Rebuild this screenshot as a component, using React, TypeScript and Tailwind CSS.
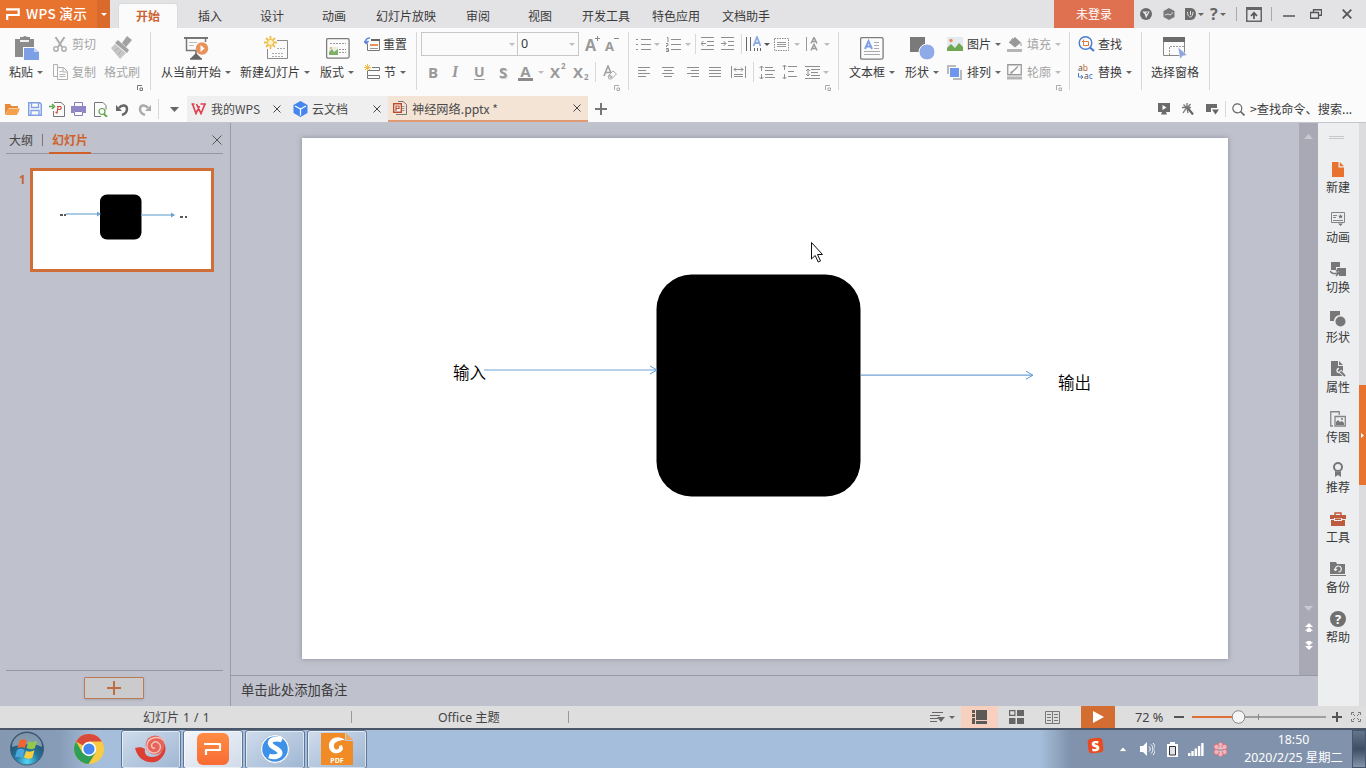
import React from "react";

type P = { className?: string; children?: React.ReactNode };

const Cell = ({ className = "", children }: P) => (
  <div className={`flex shrink-0 items-center whitespace-nowrap ${className}`}>{children}</div>
);

const Ic = ({ w, h, className = "", children }: P & { w: number; h: number }) => (
  <svg width={w} height={h} viewBox={`0 0 ${w} ${h}`} fill="none" className={`shrink-0 ${className}`}>
    {children}
  </svg>
);

const Arr = ({ className = "text-[#666]" }: P) => (
  <Ic w={6} h={3} className={className}>
    <path d="M0 0h6L3 3z" fill="currentColor" />
  </Ic>
);
const PALE = "text-[#bdbdbd]";

const VSep = ({ className = "h-[58px]" }: P) => <div className={`w-px shrink-0 bg-[#d8d8d8] ${className}`} />;

const Launcher = ({ className = "", color = "#aaa" }: P & { color?: string }) => (
  <Ic w={6} h={6} className={className}>
    <path d="M.5 5V.5H5M5.500 3v2.500H3V3z" stroke={color} />
  </Ic>
);

const Close = () => (
  <Ic w={8} h={8} className="text-[#444]">
    <path d="M.5.500l7 7M7.500.500l-7 7" stroke="currentColor" />
  </Ic>
);

/* ---------- title bar ---------- */
function TitleBar() {
  return (
    <div className="flex h-7 bg-[#e3e3e5] text-xs text-[#3a3a3a]">
      <Cell className="w-[97px] bg-[#e8732f] pl-[6px]">
        <Ic w={15} h={12}>
          <path d="M0 1.300h12.700v5.700H1.200V12" stroke="#fff" strokeWidth="2.200" />
        </Ic>
        <span className="ml-[5px] text-[13.6px] leading-none font-medium tracking-[0.3px] text-white">WPS 演示</span>
      </Cell>
      <Cell className="w-[13px] justify-center bg-[#d96a2c]">
        <Arr className="text-white" />
      </Cell>
      <div className="ml-2 flex w-[60px] items-end">
        <div className="flex h-[25px] w-full items-center justify-center rounded-t-sm border border-b-0 border-[#dadada] bg-[#fbfbfb] font-bold text-[#cc6230]">
          开始
        </div>
      </div>
      <div className="flex pt-[3px]">
        <Cell className="w-[62px] pl-5">插入</Cell>
        <Cell className="w-[62px] pl-5">设计</Cell>
        <Cell className="w-[62px] pl-5">动画</Cell>
        <Cell className="w-[82px] pl-3">幻灯片放映</Cell>
        <Cell className="w-[62px] pl-5">审阅</Cell>
        <Cell className="w-[62px] pl-5">视图</Cell>
        <Cell className="w-[70px] pl-3">开发工具</Cell>
        <Cell className="w-[70px] pl-3">特色应用</Cell>
        <Cell className="w-[70px] pl-3">文档助手</Cell>
      </div>
      <Cell className="ml-auto w-20 justify-center bg-[#df7150] text-white">未登录</Cell>
      <div className="flex w-[232px] items-center">
        <Cell className="w-[35px] pl-1.5">
          <Ic w={12} h={12}>
            <circle cx="6" cy="6" r="6" fill="#6b6b6b" />
            <path d="M2.200 3.500h7.600L6 10.200 4.800 6.500z" fill="#e3e3e5" />
            <path d="M6 5.500l2-1" stroke="#6b6b6b" />
          </Ic>
        </Cell>
        <Cell className="-ml-[6px] w-[17px]">
          <Ic w={12} h={12}>
            <path d="M6 0l5.500 3v6L6 12 .5 9V3z" fill="#777" />
            <path d="M2 7l3-1 2 1 3-2.500" stroke="#e3e3e5" strokeWidth=".9" />
          </Ic>
        </Cell>
        <Cell className="ml-[5px] w-[25px] gap-[2px]">
          <Ic w={11} h={12}>
            <path d="M0 0h6a5 6 0 010 12H0z" fill="#6b6b6b" />
            <path d="M2.500 4c0 4 2 5 3 5s2.500-2 2.500-5M5.500 3v4" stroke="#e3e3e5" />
          </Ic>
          <Arr />
        </Cell>
        <Cell className="w-[26px] gap-[2px]">
          <span className="font-['Open_Sans',sans-serif] text-[16px] leading-none font-bold text-[#666]">?</span>
          <Arr />
        </Cell>
        <VSep className="h-3.5 !bg-[#aaa]" />
        <Cell className="w-[34px] pl-[9px]">
          <Ic w={16} h={15}>
            <path d="M.75.750h14.500v13.500H.75z" stroke="#666" strokeWidth="1.500" />
            <path d="M1 2h14" stroke="#666" strokeWidth="2" />
            <path d="M8 12V6M5 9l3-3.200L11 9" stroke="#555" strokeWidth="1.700" />
          </Ic>
        </Cell>
        <VSep className="h-3.5 !bg-[#aaa]" />
        <Cell className="w-[38px] pl-[11px]">
          <Ic w={12} h={10}>
            <path d="M0 7h12" stroke="#555" strokeWidth="1.500" />
          </Ic>
        </Cell>
        <Cell className="w-[32px]">
          <Ic w={12} h={10}>
            <path d="M3.500 3V.750h8v5.500H9M.5 3.500h8v5.750h-8z" stroke="#555" strokeWidth="1.300" />
          </Ic>
        </Cell>
        <Cell>
          <Ic w={10} h={10}>
            <path d="M.7.700l8.600 8.600M9.300.700L.7 9.300" stroke="#555" strokeWidth="1.800" />
          </Ic>
        </Cell>
      </div>
    </div>
  );
}

/* ---------- ribbon ---------- */
const Big = ({ className = "", icon, label, arrow, pale }: P & { icon: React.ReactNode; label: string; arrow?: boolean; pale?: boolean }) => (
  <div className={`flex shrink-0 flex-col ${className}`}>
    <div className="flex h-8 items-center">{icon}</div>
    <div className={`flex h-4 items-center gap-[4px] whitespace-nowrap ${pale ? "text-[#a5a5a5]" : ""}`}>
      {label}
      {arrow && <Arr />}
    </div>
  </div>
);

const Rows = ({ className = "", top, bottom }: P & { top: React.ReactNode; bottom: React.ReactNode }) => (
  <div className={`flex shrink-0 flex-col ${className}`}>
    <div className="flex h-7 items-center pb-1">{top}</div>
    <div className="flex h-6 items-center">{bottom}</div>
  </div>
);

const Lines = ({ d, w = 12, h = 11, className = "" }: { d: string; w?: number; h?: number; className?: string }) => (
  <Ic w={w} h={h} className={className}>
    <path d={d} stroke="#8e8e8e" />
  </Ic>
);

const Letter = ({ className = "text-[14px]", children }: P) => (
  <span className={`font-['Open_Sans',sans-serif] leading-none font-bold text-[#999] ${className}`}>{children}</span>
);

function Ribbon() {
  return (
    <div className="flex h-[68px] bg-[#fbfbfb] pt-1 text-xs leading-none text-[#3a3a3a]">
      {/* clipboard */}
      <div className="flex w-[150px]">
        <Big
          className="ml-[9px] w-[44px]"
          label="粘贴"
          arrow
          icon={
            <Ic w={25} h={24} className="ml-1.5">
              <path d="M0 3h5V1h3a3 3 0 014 0h3v2h4v9H9v9H0z" fill="#8b8b8b" />
              <path d="M5 4h9v2H5z" fill="#eee" />
              <path d="M8 11h11l6 5v8H8z" fill="#fbfbfb" />
              <path d="M9 12h10l5 4v8H9z" fill="#7d9fe6" />
              <path d="M19 12v4h5z" fill="#c7d6f6" />
            </Ic>
          }
        />
        <Rows
          className="w-[51px] text-[#a5a5a5]"
          top={
            <>
              <Ic w={14} h={15}>
                <path d="M2.500 0l6.500 10M11.500 0L5 10" stroke="#adadad" strokeWidth="2" />
                <circle cx="3" cy="12" r="2.200" stroke="#adadad" strokeWidth="1.500" />
                <circle cx="11" cy="12" r="2.200" stroke="#adadad" strokeWidth="1.500" />
              </Ic>
              <span className="ml-[5px]">剪切</span>
            </>
          }
          bottom={
            <>
              <Ic w={15} h={16}>
                <path d="M4.500 3.500V.500h-4v12h4M4.500 3.500h6l4 4v8h-10zM10 4v4h4" stroke="#b0b0b0" />
                <path d="M6.500 7.500h3M6.500 10.500h6M6.500 12.500h6" stroke="#b8b8b8" />
              </Ic>
              <span className="ml-1">复制</span>
            </>
          }
        />
        <div className="flex w-[46px] flex-col">
          <Big
            className="w-[36px]"
            label="格式刷"
            pale
            icon={
              <Ic w={24} h={24} className="ml-1.5">
                <path d="M17 0l5 4-6 7-4-4z" fill="#a2a2a2" />
                <path d="M8 4l11 10-2 3L5 7z" fill="#a2a2a2" />
                <path d="M5 8l11 9-6 6-9-11z" fill="#c6c6c6" />
                <path d="M5 15l3-3M8 19l3-4" stroke="#aaa" />
              </Ic>
            }
          />
          <Launcher className="mt-[5px] ml-[33px]" color="#777" />
        </div>
      </div>
      <VSep />
      {/* slides */}
      <div className="flex w-[265px]">
        <Big
          className="ml-[10px] w-[70px]"
          label="从当前开始"
          arrow
          icon={
            <Ic w={26} h={24} className="ml-[23px]">
              <path d="M0 2h24" stroke="#777" strokeWidth="2" />
              <path d="M2.500 2v12.500H15M21.500 2v4" stroke="#777" strokeWidth="1.500" />
              <path d="M5 6.500h8M5 9.500h5" stroke="#bbb" />
              <path d="M12 15v4M6 23h12M12 18l-4 4h8z" stroke="#666" strokeWidth="1.500" fill="#666" />
              <circle cx="18" cy="12.500" r="6.200" fill="#e8935b" />
              <path d="M16.500 9v7l4-3.500z" fill="#fff" />
            </Ic>
          }
        />
        <Big
          className="ml-[9px] w-[71px]"
          label="新建幻灯片"
          arrow
          icon={
            <Ic w={26} h={24} className="ml-6">
              <path d="M3.500 13v9.500h20v-18H13" stroke="#8b8b8b" />
              <path d="M8 17.500h11M8 20.500h11M13 12.500h8" stroke="#aaa" strokeDasharray="2 1" />
              <path d="M6.500 0v13M0 6.500h13M2 2l9 9M11 2l-9 9" stroke="#f0bd4b" strokeWidth="1.800" />
              <circle cx="6.500" cy="6.500" r="3" fill="#fff3c8" stroke="#f0bd4b" />
            </Ic>
          }
        />
        <Big
          className="ml-[9px] w-[44px]"
          label="版式"
          arrow
          icon={
            <Ic w={24} h={21} className="ml-[6px]">
              <rect x=".6" y=".6" width="22.500" height="19.500" rx="1.500" stroke="#7c7c7c" strokeWidth="1.300" />
              <path d="M4 5.500h16M13 11.500h7M13 14.500h7" stroke="#999" strokeDasharray="2 1" />
              <path d="M3 9h9v8H3z" fill="#e7efe0" />
              <path d="M3 17v-3l3-3 2 3 4-3v6z" fill="#7fb068" />
              <path d="M4 9h2v2H4z" fill="#f1b08a" />
            </Ic>
          }
        />
        <Rows
          top={
            <>
              <Ic w={16} h={15}>
                <path d="M3.500 6.500v7h12v-11H7" stroke="#777" />
                <path d="M7 3h9" stroke="#666" strokeWidth="2" />
                <path d="M6 8h8" stroke="#e8935b" strokeWidth="2" />
                <path d="M6 11.500h8" stroke="#999" />
                <path d="M6 1C2 1 1.500 3 2 6M0 4l2.200 2.500L4.500 4" stroke="#5b80d8" strokeWidth="1.500" />
              </Ic>
              <span className="ml-[3px]">重置</span>
            </>
          }
          bottom={
            <>
              <Ic w={16} h={16}>
                <path d="M8 3.500h7.500v3H3.500M3.500 6v5.500M15.500 14.500h-12v-3h12z" stroke="#777" />
                <path d="M3.500 0v7M0 3.500h7M1 1l5 5M6 1L1 6" stroke="#f0bd4b" />
              </Ic>
              <span className="mr-1 ml-1">节</span>
              <Arr />
            </>
          }
        />
      </div>
      <VSep />
      {/* font */}
      <div className="flex w-[211px] flex-col pl-1">
        <div className="flex h-6">
          <div className="flex w-[158px] border border-[#c8c8c8]">
            <div className="flex w-[96px] items-center justify-end border-r border-[#c8c8c8] pr-[2px]">
              <Arr className={PALE} />
            </div>
            <div className="flex flex-1 items-center justify-between pr-[3px] pl-[3px] font-['Noto_Sans',sans-serif] text-[12.5px]">
              0<Arr className={PALE} />
            </div>
          </div>
          <Cell className="ml-[6px] w-5 items-start">
            <Letter className="mt-[5px] text-[16px]">A</Letter>
            <Ic w={5} h={5} className="-ml-px mt-1">
              <path d="M2.500 0v5M0 2.500h5" stroke="#888" />
            </Ic>
          </Cell>
          <Cell>
            <Letter className="mt-1 text-[13px]">A</Letter>
            <Ic w={5} h={12}>
              <path d="M0 .5h5" stroke="#888" />
            </Ic>
          </Cell>
        </div>
        <div className="flex h-8 items-center">
          <Cell className="ml-[7px] w-6"><Letter className="text-[15px]">B</Letter></Cell>
          <Cell className="w-[22px]"><span className="font-['Liberation_Serif',serif] text-[16px] font-bold text-[#999] italic">I</span></Cell>
          <Cell className="w-[25px]"><Letter className="text-[14px] underline underline-offset-2">U</Letter></Cell>
          <Cell className="w-[19px]"><Letter className="text-[15px] drop-shadow-[1px_1px_0px_#ccc]">S</Letter></Cell>
          <Cell className="w-5">
            <div className="flex w-[15px] flex-col items-center">
              <Letter className="h-[13px] text-[15px]">A</Letter>
              <div className="mt-px h-[3px] w-[15px] bg-[#8b8b8b]" />
            </div>
          </Cell>
          <Cell className="w-3"><Arr className={PALE} /></Cell>
          <Cell className="w-[23px]"><Letter className="text-[15px]">X</Letter><Letter className="-mt-3 ml-px text-[8px]">2</Letter></Cell>
          <Cell className="w-[22px]"><Letter className="text-[15px]">X</Letter><Letter className="mt-2.5 ml-px text-[8px]">2</Letter></Cell>
          <VSep className="h-5" />
          <Cell className="pl-[7px]">
            <Ic w={14} h={15}>
              <path d="M1 11L5 1l3 7M2.500 7.500H7" stroke="#a0a0a0" strokeWidth="1.600" />
              <path d="M5 11l5-5 3.500 3-5 5H6z" stroke="#aaa" />
              <path d="M5.500 11l2.500 2.500 2-1.500-3-2.500z" fill="#b5b5b5" />
            </Ic>
          </Cell>
        </div>
        <Launcher className="-mt-[3px] ml-[193px]" />
      </div>
      <VSep />
      {/* paragraph */}
      <div className="flex w-[209px] flex-col">
        <div className="flex h-6 items-center">
          <Cell className="mr-[6px] w-[19px] pl-[7px]">
            <Lines w={15} h={13} d="M5 1.500h10M5 6.500h10M5 11.500h10M0 1.500h2M0 6.500h2M0 11.500h2M.5 1v1M.5 6v1M.5 11v1" />
          </Cell>
          <Cell className="w-3"><Arr className={PALE} /></Cell>
          <Cell className="w-[19px]">
            <Lines w={15} h={15} d="M5 2.500h10M5 7.500h10M5 12.500h10M1 .5h1V5M0 6.500h2v2H.5V10M0 11.500h2.500V15M0 14.500h2.500M0 13h2" />
          </Cell>
          <Cell className="w-[10px]"><Arr className={PALE} /></Cell>
          <VSep className="h-5" />
          <Cell className="w-[20px] pl-[5px]">
            <Lines w={13} h={14} d="M0 .5h13M6 4.500h7M6 8.500h7M0 12.500h13M0 6.500h5M2.500 4L0 6.500 2.500 9" />
          </Cell>
          <Cell className="w-[25px] pl-[5px]">
            <Lines w={13} h={14} d="M0 .5h13M7 4.500h6M7 8.500h6M0 12.500h13M0 6.500h5M2.500 4L5 6.500 2.500 9" />
          </Cell>
          <VSep className="h-5" />
          <Cell className="w-[22px] pl-1">
            <Ic w={16} h={16}>
              <path d="M.5 1v14M4.500 1v14M8.500 12v3M11.500 12v3M14.500 12v3" stroke="#666" />
              <path d="M7.500 10l3.500-9L14.500 10M9 7h4" stroke="#8fa9e4" strokeWidth="1.800" />
            </Ic>
          </Cell>
          <Cell className="w-[10px]"><Arr className="text-[#555]" /></Cell>
          <Cell className="w-[20px]">
            <Ic w={15} h={13}>
              <path d="M.5.500h14v12H.5z" stroke="#8e8e8e" strokeDasharray="1.500 1" />
              <path d="M3 4.500h9M3 6.500h9M3 8.500h9" stroke="#999" />
            </Ic>
          </Cell>
          <Cell className="w-3"><Arr className={PALE} /></Cell>
          <Cell className="w-[18px]">
            <Ic w={12} h={14}>
              <path d="M.5 0v14" stroke="#999" />
              <path d="M5 6.500l3-6 3 6M6 4.500h4M5 13.500l3-6 3 6M6 11.500h4" stroke="#999" strokeWidth="1.500" />
            </Ic>
          </Cell>
          <Arr className={PALE} />
        </div>
        <div className="flex h-8 items-center">
          <Cell className="ml-[9px] w-6"><Lines d="M0 .5h12M0 3.500h8M0 6.500h12M0 9.500h8" /></Cell>
          <Cell className="w-[25px]"><Lines d="M0 .5h12M2 3.500h8M0 6.500h12M2 9.500h8" /></Cell>
          <Cell className="w-[22px]"><Lines d="M0 .5h12M4 3.500h8M0 6.500h12M4 9.500h8" /></Cell>
          <Cell className="w-[22px]"><Lines d="M0 .5h12M0 3.500h12M0 6.500h12M0 9.500h12" /></Cell>
          <Cell className="w-[22px]"><Lines w={15} h={12} d="M.5 0v12M14.500 0v12M3 3.500h9M5 1.500l-2 2 2 2M10 1.500l2 2-2 2M3 8.500h9M3 10.500h9" /></Cell>
          <VSep className="h-5" />
          <Cell className="w-[28px] pl-[5px]"><Lines w={16} h={15} d="M6 2.500h8M6 5.500h10M6 9.500h8M6 12.500h10M2.500 1v5M2.500 9v5M.5 3l2-2 2 2M.5 12l2 2 2-2" /></Cell>
          <Cell className="w-[23px]"><Lines w={15} h={15} d="M6 1.500h9M6 6.500h6M6 11.500h9M2.500 0v5M.5 2l2-2 2 2M2.500 9v5M.5 12l2 2 2-2" /></Cell>
          <Cell className="w-[18px]"><Lines w={15} h={13} d="M0 .5h15M6 3.500h9M6 6.500h7M6 9.500h9M0 12.500h15M3 3v7M1 5l2-2 2 2M1 8l2 2 2-2" /></Cell>
          <Arr className={PALE} />
        </div>
        <Launcher className="-mt-[3px] ml-[196px]" />
      </div>
      <VSep />
      {/* drawing */}
      <div className="flex w-[230px]">
        <Big
          className="ml-[10px] w-[46px]"
          label="文本框"
          arrow
          icon={
            <Ic w={24} h={23} className="ml-[11px]">
              <rect x=".6" y=".6" width="22.500" height="21.500" rx="1.500" stroke="#7c7c7c" strokeWidth="1.300" />
              <path d="M5 12l3.500-8L12 12M6.200 9.500h4.600" stroke="#7d9fe6" strokeWidth="1.900" />
              <path d="M14 5.500h5M14 8.500h5M14 11.500h5M4 14.500h16M4 17.500h16" stroke="#aaa" />
            </Ic>
          }
        />
        <Big
          className="ml-[10px] w-[42px]"
          label="形状"
          arrow
          icon={
            <Ic w={25} h={23} className="ml-[5px]">
              <path d="M0 0h15v15H0z" fill="#7a7a7a" />
              <circle cx="17" cy="15" r="8" fill="#8eabe8" stroke="#fbfbfb" />
            </Ic>
          }
        />
        <Rows
          className="w-[60px]"
          top={
            <>
              <Ic w={16} h={15}>
                <path d="M0 0h16v14H0z" fill="#e3ebf0" />
                <path d="M0 14v-3l4-4 4 4 4-5 4 4v4z" fill="#6fa853" />
                <circle cx="4" cy="3.500" r="1.700" fill="#ec8a50" />
              </Ic>
              <span className="mr-1 ml-1">图片</span>
              <Arr />
            </>
          }
          bottom={
            <>
              <Ic w={16} h={15}>
                <path d="M0 0h9v2H2v7H0zM15 5v10H6v-2h7V5z" fill="#bababa" />
                <path d="M3 3h9v9H3z" fill="#6e97ec" />
              </Ic>
              <span className="mr-1 ml-1">排列</span>
              <Arr />
            </>
          }
        />
        <div className="flex flex-col text-[#a5a5a5]">
          <Rows
            top={
              <>
                <Ic w={16} h={15}>
                  <path d="M2 5.500L8 0l6 5.500-6 5z" fill="#999" />
                  <path d="M2 6l4-5M14 6v3" stroke="#999" />
                  <path d="M0 13.500h15" stroke="#b5b5b5" strokeWidth="3" />
                </Ic>
                <span className="mr-1 ml-1">填充</span>
                <Arr className={PALE} />
              </>
            }
            bottom={
              <>
                <Ic w={16} h={16}>
                  <path d="M.75.750h13.500v10H.75zM4 9l7-6.500" stroke="#999" strokeWidth="1.300" />
                  <path d="M3 10l1-3 2 2z" fill="#999" />
                  <path d="M0 14h15" stroke="#b5b5b5" strokeWidth="3" />
                </Ic>
                <span className="mr-1 ml-1">轮廓</span>
                <Arr className={PALE} />
              </>
            }
          />
          <Launcher className="mt-px ml-[49px]" />
        </div>
      </div>
      <VSep />
      {/* editing */}
      <Rows
        className="w-[71px] pl-2"
        top={
          <>
            <Ic w={17} h={16}>
              <circle cx="7.500" cy="7" r="6.300" stroke="#4b7bd0" strokeWidth="1.400" />
              <path d="M12 11.500l4 3.500" stroke="#4b7bd0" strokeWidth="2.200" />
              <path d="M4 5.500h6.500V10M5.500 3.500v6H11" stroke="#d97f43" />
            </Ic>
            <span className="ml-[3px]">查找</span>
          </>
        }
        bottom={
          <>
            <div className="flex w-4 flex-col font-['Noto_Sans',sans-serif] text-[8.5px] leading-[8px]">
              <div className="flex h-2 text-[#555]">
                a<span className="text-[#c96f33]">b</span>
              </div>
              <div className="flex h-2 items-center text-[#555]">
                <Ic w={6} h={6}><path d="M.5 0v4h4M3 2l2 2-2 2" stroke="#4b7bd0" /></Ic>
                a<span className="text-[#4b7bd0]">c</span>
              </div>
            </div>
            <span className="mr-[4px] ml-1">替换</span>
            <Arr />
          </>
        }
      />
      <VSep />
      <Big
        className="w-[67px] pl-[9px]"
        label="选择窗格"
        icon={
          <Ic w={25} h={22} className="ml-3">
            <path d="M.5.500h21v18H.5z" stroke="#888" />
            <path d="M0 0h22v5H0z" fill="#6b6b6b" />
            <path d="M6.500 18V9.500H21" stroke="#999" strokeDasharray="2 1" />
            <path d="M15 10l9 8-4 .5L17 22z" fill="#8fa5e0" stroke="#fbfbfb" strokeWidth=".5" />
          </Ic>
        }
      />
      <VSep />
    </div>
  );
}

/* ---------- quick access + document tabs ---------- */
function DocBar() {
  return (
    <div className="flex h-[27px] items-center border-b border-[#c3c4ce] bg-[#fbfbfb] text-xs leading-none text-[#4a4a4a]">
      <Cell className="ml-[5px] w-[23px]">
        <Ic w={15} h={12}>
          <path d="M0 12V1h5l1.500 2H13v2H4z" fill="#e88a35" />
          <path d="M3.500 5.500H15L12 12H.5z" fill="#f4a04c" />
        </Ic>
      </Cell>
      <Cell className="w-[21px]">
        <Ic w={14} h={14}>
          <path d="M.75.750h11l1.500 1.500v11H.75z" stroke="#7fa0e4" strokeWidth="1.500" />
          <path d="M3.500 1v4.500h7V1M3 13V8.500h8V13" stroke="#7fa0e4" strokeWidth="1.300" />
        </Ic>
      </Cell>
      <Cell className="w-[22px]">
        <Ic w={16} h={15}>
          <path d="M5 .5h7l3.500 3v11H4.500V9" stroke="#777" />
          <path d="M0 4.500h4M3 2l2.500 2.500L3 7" stroke="#5fa548" strokeWidth="1.500" />
          <path d="M8 4.500h3.500c1.500 1 .5 3-1 3H9M9 5l-1 6-1.500-1" stroke="#cf4a40" strokeWidth="1.200" />
        </Ic>
      </Cell>
      <Cell className="w-[23px]">
        <Ic w={15} h={14}>
          <path d="M3.500 4V.500h8V4M3.500 9.500h8v4h-8z" stroke="#877fbf" />
          <path d="M0 4h15v7h-3V9H3v2H0z" fill="#9088c6" />
        </Ic>
      </Cell>
      <Cell className="w-[22px]">
        <Ic w={14} h={15}>
          <path d="M7 14.500H.500V.500H9l3 3v4" stroke="#777" />
          <circle cx="8" cy="9.500" r="3" stroke="#5fa548" strokeWidth="1.200" />
          <path d="M10 12l3 3" stroke="#5fa548" strokeWidth="1.800" />
        </Ic>
      </Cell>
      <Cell className="w-[22px]">
        <Ic w={13} h={13}>
          <path d="M3 5c3-4 8-3 8 1 0 3-2 5-5 6" stroke="#666" strokeWidth="2.400" />
          <path d="M0 2v6h6z" fill="#666" />
        </Ic>
      </Cell>
      <Cell className="w-[20px]">
        <Ic w={13} h={13}>
          <path d="M10 5C7 1 2 2 2 6c0 3 2 5 5 6" stroke="#aaa" strokeWidth="2.400" />
          <path d="M13 2v6H7z" fill="#aaa" />
        </Ic>
      </Cell>
      <VSep className="h-5" />
      <Cell className="w-[28px] pl-[11px]">
        <Ic w={9} h={5}><path d="M0 0h9L4.500 5z" fill="#666" /></Ic>
      </Cell>
      <div className="flex h-full w-[101px] items-center bg-[#efeff0] pl-1">
        <Ic w={16} h={12}>
          <path d="M.5 1h3M1.500 1l3.500 9.500L8.500 3M5.500 1l4.500 9.500L14 1M9.500 1H15" stroke="#dc4451" strokeWidth="1.700" />
        </Ic>
        <span className="ml-1 w-[62px]">我的WPS</span>
        <Close />
      </div>
      <div className="flex h-full w-[100px] items-center bg-[#efeff0] pl-[5px]">
        <Ic w={15} h={16}>
          <path d="M7.500 0l7 4v8l-7 4-7-4V4z" fill="#4585ef" />
          <path d="M2 5l5.500 3L13 5M7.500 8v6.500" stroke="#fff" strokeWidth="1.200" />
        </Ic>
        <span className="ml-1 w-[61px]">云文档</span>
        <Close />
      </div>
      <div className="flex h-full w-[200px] items-center border-b-2 border-[#de9a72] bg-[#f3e4d6] pl-[5px]">
        <Ic w={14} h={14}>
          <path d="M5 .5h5l3.500 3v10H3" stroke="#777" />
          <path d="M8 5.500h3.500M8 7.500h3.500M8 9.500h3.500" stroke="#999" />
          <path d="M.7 2.700h7.600v8.600H.7z" fill="#fff" stroke="#bd4b2b" strokeWidth="1.400" />
          <path d="M3 10V5h3v2.500H3" stroke="#bd4b2b" strokeWidth="1.200" />
        </Ic>
        <span className="ml-[5px] w-[161px] pt-0.5 text-[12.2px]">神经网络.pptx *</span>
        <Close />
      </div>
      <Ic w={12} h={12} className="ml-[7px]">
        <path d="M6 0v12M0 6h12" stroke="#777" strokeWidth="2" />
      </Ic>
      <Cell className="ml-auto w-6">
        <Ic w={12} h={12}>
          <path d="M0 0h12v9H8l1 2.500H3L4 9H0z" fill="#6b6b6b" />
          <path d="M4.500 2v5l4-2.500z" fill="#fff" />
        </Ic>
      </Cell>
      <Cell className="w-6">
        <Ic w={12} h={12}>
          <path d="M5 4l6 7.500" stroke="#666" strokeWidth="2.200" />
          <path d="M0 4.500h9M5 0v4L1 10M8.500 1L5 5M1.500 1.500L5 5l1 5" stroke="#777" strokeWidth="1.300" />
        </Ic>
      </Cell>
      <Cell className="w-[19px]">
        <Ic w={13} h={11}>
          <path d="M0 0h11v4H5v4H0z" fill="#6b6b6b" />
          <path d="M6 5.500h7L9.500 10.500z" fill="#666" />
        </Ic>
      </Cell>
      <VSep className="h-4" />
      <Ic w={13} h={13} className="ml-[6px]">
        <circle cx="5.300" cy="5.300" r="4.500" stroke="#666" strokeWidth="1.200" />
        <path d="M8.500 8.500l4 4" stroke="#666" strokeWidth="1.700" />
      </Ic>
      <span className="ml-[5px] w-[116px] text-[12.2px] whitespace-nowrap text-[#3a3a3a]">&gt;查找命令、搜索...</span>
    </div>
  );
}

/* ---------- slide list ---------- */
function SlidePanel() {
  return (
    <div className="flex w-[231px] flex-col border-r border-[#999ba8] bg-[#bfc1cc] px-1.5 text-xs">
      <div className="mr-[1px] flex h-[31px] border-b border-[#9496a3] text-[#444]">
        <div className="flex items-center pt-1">
          <span className="ml-[3px]">大纲</span>
          <div className="mr-[6px] ml-[9px] h-3 w-px bg-[#777]" />
        </div>
        <div className="-mb-px flex h-[31px] items-center border-b-2 border-[#cf6029] px-[3px] pt-[5px] font-bold text-[#d0622b]">幻灯片</div>
        <Ic w={10} h={10} className="mt-3 mr-[1px] ml-auto">
          <path d="M.5.500l9 9M9.500.500l-9 9" stroke="#555" />
        </Ic>
      </div>
      <div className="flex flex-1 pt-[14px]">
        <span className="mt-[4px] w-6 pl-[13px] font-['Noto_Sans',sans-serif] text-[11.5px] font-bold text-[#c9602d]">1</span>
        <div className="h-[104px] w-[184px] border-[3px] border-[#d06e37] bg-white">
          <svg width="178" height="98" viewBox="0 0 178 98" fill="none">
            <rect x="67" y="23.500" width="41.500" height="45" rx="7" fill="#000" />
            <path d="M33 43h33M108 44h33" stroke="#8ebadc" strokeWidth="1.500" />
            <path d="M64 40.500l4 2.500-4 2.500M138 41.500l4 2.500-4 2.500" fill="#6ba2d0" />
            <path d="M27 44h3M31 44h2M147 46h3M152 46h2" stroke="#222" strokeWidth="1.500" />
          </svg>
        </div>
      </div>
      <div className="mr-[1px] flex h-9 justify-center border-t border-[#9496a3] pt-[6px] pr-[1px]">
        <div className="flex h-[22px] w-[60px] items-center justify-center rounded-[1px] border border-[#bd7a56] bg-[#cbcbcd] shadow-sm">
          <Ic w={14} h={14}>
            <path d="M7 0v14M0 7h14" stroke="#c06c42" strokeWidth="2" />
          </Ic>
        </div>
      </div>
    </div>
  );
}

/* ---------- editing area ---------- */
function Stage() {
  return (
    <div className="flex flex-1 flex-col bg-[#bfc1cc]">
      <div className="flex h-[552px]">
        <div className="flex-1 pt-[15px] pl-[71px]">
          <div className="relative h-[521px] w-[926px] bg-white shadow-[0_0_5px_rgba(90,90,110,0.5)]">
            <svg width="926" height="521" viewBox="0 0 926 521" fill="none">
              <rect x="354.500" y="136.500" width="204" height="222" rx="35" fill="#000" />
              <path d="M182 232h173M559 237.200h171" stroke="#6fa3d3" strokeWidth="1.200" />
              <path d="M348 228l7 4-7 4M724 233.200l7 4-7 4" stroke="#5b9bd5" />
              <path d="M509.500 104.500v16.500l3.700-3.500 3 6.500 2.300-1-3-6.500h5z" fill="#fff" stroke="#111" />
            </svg>
            <span className="absolute top-[225px] left-[151px] text-[16.6px] leading-[18px] font-[350] text-black">输入</span>
            <span className="absolute top-[235px] left-[756px] text-[16.6px] leading-[18px] font-[350] text-black">输出</span>
          </div>
        </div>
        <div className="flex w-[19px] flex-col items-center bg-[#a9a9b5]">
          <Ic w={9} h={5} className="mt-[11px]"><path d="M4.500 0L9 5H0z" fill="#c8c8cf" /></Ic>
          <Ic w={9} h={5} className="mt-auto"><path d="M0 0h9L4.500 5z" fill="#c8c8cf" /></Ic>
          <Ic w={8} h={9} className="mt-3"><path d="M4 0l4 4H0zM4 4l4 4H0zM2 8h4v1H2z" fill="#fff" /></Ic>
          <Ic w={8} h={9} className="mt-[9px] mb-[25px]"><path d="M0 1h8L4 5zM0 5h8L4 9zM2 0h4v1H2z" fill="#fff" /></Ic>
        </div>
      </div>
      <div className="flex flex-1 items-center border-t border-[#9799a7] pb-0.5 pl-[10px] text-[13.3px] leading-none text-[#3a3a3a]">
        单击此处添加备注
      </div>
    </div>
  );
}

/* ---------- task pane ---------- */
const Tool = ({ label, children }: P & { label: string }) => (
  <div className="flex h-[50px] flex-col items-center">
    <div className="flex h-[18px] items-center">{children}</div>
    <span className="mt-[1px] leading-[15px]">{label}</span>
  </div>
);

function SideTools() {
  return (
    <div className="flex w-12 bg-[#dcdcde]">
      <div className="flex w-[41px] flex-col bg-[#eceef0] pr-px text-xs text-[#3a3a3a]">
        <div className="mt-[13px] mb-[21px] ml-[11px] h-[3px] w-[15px] border-y border-[#c8c8ca]" />
        <Tool label="新建">
          <Ic w={12} h={15}><path d="M0 0h6.500v5.500H12V15H0zM7.800 0L12 4.300H7.800z" fill="#e8732f" /></Ic>
        </Tool>
        <Tool label="动画">
          <Ic w={14} h={14}>
            <path d="M.5.500h13v10H.5zM2 3.500h4M2 5.500h3M2 8.500h10" stroke="#858585" />
            <path d="M9.500 2l.8 1.700 1.700.1-1.300 1.100.5 1.700-1.700-.9-1.600.9.500-1.700L7 3.800l1.800-.1zM7 11.500h5L9.500 14z" fill="#777" />
          </Ic>
        </Tool>
        <Tool label="切换">
          <Ic w={16} h={15}>
            <path d="M1 0h9v5H6v3H1zM7 6h9v8H9V9H7z" fill="#777" />
            <path d="M0 9c2 3 4 3 8 2M6 8l3 3-3 3" stroke="#777" strokeWidth="1.500" />
          </Ic>
        </Tool>
        <Tool label="形状">
          <Ic w={16} h={16}>
            <path d="M0 0h10v4a6 6 0 00-6 6H0z" fill="#777" />
            <circle cx="10.500" cy="10.500" r="5" fill="#777" />
          </Ic>
        </Tool>
        <Tool label="属性">
          <Ic w={15} h={16}>
            <path d="M0 0h7v5h5v10H0z" fill="#777" />
            <path d="M8 0l4 4H8z" fill="#777" />
            <path d="M9 10l5 5" stroke="#eceef0" strokeWidth="3.500" />
            <path d="M8 7.500a2 2 0 102 2" stroke="#eceef0" strokeWidth="1.300" />
            <path d="M9.500 10.500l4.500 4.500" stroke="#777" strokeWidth="2" />
          </Ic>
        </Tool>
        <Tool label="传图">
          <Ic w={16} h={16}>
            <path d="M3 15H.750V.750h8.500V4M5 5.500h10.300v9.500H5z" stroke="#858585" strokeWidth="1.300" />
            <path d="M6 14v-3l2-2 2 2 2-1 2 2v2z" fill="#777" /><circle cx="12" cy="8" r="1" fill="#777" />
          </Ic>
        </Tool>
        <Tool label="推荐">
          <Ic w={12} h={15}>
            <circle cx="6" cy="5" r="4" stroke="#777" strokeWidth="2" />
            <path d="M3 9v6l3-2 3 2V9L6 10z" fill="#777" />
          </Ic>
        </Tool>
        <Tool label="工具">
          <Ic w={16} h={14}>
            <path d="M5 3V1h6v2" stroke="#be5a3e" strokeWidth="1.400" />
            <path d="M0 3h16v4H12V6H4v1H0zM1 8h3v1h8V8h3v6H1z" fill="#be5a3e" />
            <path d="M5 6.500h6v1.500H5z" fill="#be5a3e" />
          </Ic>
        </Tool>
        <Tool label="备份">
          <Ic w={16} h={14}>
            <path d="M0 0h6l1 2h8v10H0zM0 13h16v1H0z" fill="#777" />
            <path d="M5.500 8A3 3 0 118.500 10M4 7l1.500 1.500L7 7" stroke="#eceef0" strokeWidth="1.200" />
          </Ic>
        </Tool>
        <Tool label="帮助">
          <div className="flex h-4 w-4 items-center justify-center rounded-full bg-[#707070] font-['Open_Sans',sans-serif] text-[13px] leading-none font-bold text-white">?</div>
        </Tool>
      </div>
      <div className="flex w-[7px] flex-col pt-[262px]">
        <div className="flex h-[100px] items-center justify-center bg-[#e8732f]">
          <Ic w={3} h={5}><path d="M0 0l3 2.500L0 5z" fill="#fff" /></Ic>
        </div>
      </div>
    </div>
  );
}

/* ---------- status bar ---------- */
function StatusBar() {
  return (
    <div className="flex h-[22px] items-center bg-[#dededf] font-['Noto_Sans','Noto_Sans_CJK_SC',sans-serif] text-xs leading-none text-[#444]">
      <Cell className="w-[351px] pt-px pl-[143px] [word-spacing:1px]">幻灯片 1 / 1</Cell>
      <VSep className="h-3 !bg-[#999]" />
      <Cell className="w-[216px] pt-0.5 pl-[86px] text-[12.3px]">Office 主题</Cell>
      <VSep className="h-3 !bg-[#999]" />
      <Cell className="ml-auto w-[31px] gap-1">
        <Ic w={15} h={11}>
          <path d="M2 .5h11M0 3.500h10M0 6.500h8M0 9.500h7" stroke="#666" />
          <path d="M7 5h8l-4 5z" fill="#666" />
        </Ic>
        <Arr />
      </Cell>
      <Cell className="h-full w-[37px] justify-center bg-[#f8d0bf]">
        <Ic w={16} h={14}>
          <path d="M0 0h3v3H0zM0 4h3v3H0zM0 8h3v6H0zM4 0H15v10H4zM4 11H15v3H4z" fill="#5c5957" />
        </Ic>
      </Cell>
      <Cell className="w-[37px] justify-center">
        <Ic w={15} h={14}>
          <path d="M8 0h7v6H8zM0 8h6.500v6H0zM8 8h7v6H8z" fill="#666" />
          <path d="M.6.600h5.300v4.800H.6z" stroke="#666" strokeWidth="1.200" />
        </Ic>
      </Cell>
      <Cell className="w-[46px] pl-[10px]">
        <Ic w={15} h={13}>
          <path d="M.5.500h7v12h-7zM7.500.500h7v12h-7zM2 3.500h4M2 6.500h4M2 9.500h4M9 3.500h4M9 6.500h4M9 9.500h4" stroke="#777" />
        </Ic>
      </Cell>
      <Cell className="h-full w-[34px] justify-center bg-[#d36d31]">
        <Ic w={11} h={12}><path d="M0 0v12l11-6z" fill="#fff" /></Ic>
      </Cell>
      <Cell className="w-[59px] pl-5 text-[12.7px]">72 %</Cell>
      <Ic w={10} h={2}><path d="M0 1h10" stroke="#555" strokeWidth="2" /></Ic>
      <Ic w={136} h={16} className="ml-2">
        <path d="M0 8h46" stroke="#dc7038" strokeWidth="2" />
        <path d="M46 8h88" stroke="#888" strokeWidth="1.500" />
        <path d="M66.500 5v6" stroke="#888" />
        <circle cx="46.500" cy="8" r="6.300" fill="#f5f5f5" stroke="#888" />
      </Ic>
      <Ic w={10} h={10} className="ml-1"><path d="M5 0v10M0 5h10" stroke="#555" strokeWidth="2" /></Ic>
      <Ic w={10} h={10} className="mr-[5px] ml-[9px]">
        <path d="M.5 3V.500H3M7 .5h2.500V3M9.500 7v2.500H7M3 9.500H.500V7M2 2l2 2M8 2L6 4M2 8l2-2M8 8L6 6" stroke="#777" />
      </Ic>
    </div>
  );
}

/* ---------- taskbar ---------- */
const TaskButton = ({ active, children }: P & { active?: boolean }) => (
  <div
    className={`flex h-[39px] w-[60px] items-center justify-center rounded-[3px] border border-[#5f7694] shadow-[inset_0_0_0_1px_rgba(255,255,255,0.55)] ${
      active ? "bg-linear-to-br from-[#f3f6fa] to-[#d0dbe9]" : "bg-linear-to-br from-[#cfdcec] to-[#9fb6d2]"
    }`}
  >
    {children}
  </div>
);

function Taskbar() {
  return (
    <div className="flex h-10 items-center border-t-2 border-[#4a5568] bg-[linear-gradient(90deg,#8498b2_0px,#879cb7_60px,#a5bedb_95px,#a5bedb_1040px,#8193ac_1070px,#8193ac_1366px)]">
      <Cell className="w-[74px] pl-[9px]">
        <svg width="36" height="36" viewBox="0 0 36 36">
          <defs>
            <radialGradient id="orb" cx=".5" cy=".9" r=".8">
              <stop offset="0" stopColor="#55d8f5" />
              <stop offset=".45" stopColor="#24759f" />
              <stop offset="1" stopColor="#28445f" />
            </radialGradient>
          </defs>
          <circle cx="18" cy="17.500" r="16.500" fill="url(#orb)" stroke="#435d76" />
          <path d="M3 16a15 14 0 0130 0c-8-4-20-3-30 0z" fill="#cbd9e4" opacity=".55" />
          <path d="M10.500 9.500c3-2 5.500-1 7.500 0l-2 7.500c-2-1-4.500-1-7.500 0z" fill="#ee6533" />
          <path d="M19.500 10.500c3 1 5.500 1 8.500-1l-2 7.500c-3 2-5.500 1-8.500 0z" fill="#93c84a" />
          <path d="M8 19c3-2 5.500-1 7.500 0l-2 7.500c-2-1-4.500-1-7.500 0z" fill="#4aa8df" />
          <path d="M17 20c3 1 5.500 1 8.500-1l-2 7.500c-3 2-5.500 1-8.500 0z" fill="#f9cd3e" />
        </svg>
      </Cell>
      <Cell className="w-[47px]">
        <svg width="30" height="30" viewBox="0 0 30 30">
          <circle cx="15" cy="15" r="15" fill="#f8cb43" />
          <path d="M15 15L2 7.500A15 15 0 0128 7.500H15z" fill="#d94a3c" />
          <path d="M2 7.500A15 15 0 0014.500 30L21.500 18.700 15 15l-6.500 3.700z" fill="#2f9e57" />
          <circle cx="15" cy="15" r="7.200" fill="#fff" />
          <circle cx="15" cy="15" r="5.600" fill="#4688ee" />
        </svg>
      </Cell>
      <div className="flex gap-[2px]">
        <TaskButton>
          <svg width="34" height="30" viewBox="0 0 34 30" fill="none">
            <path d="M1 14c4-1 7-1 10 1-1 5 2 8 7 8 6 0 11-4 11-10l-1-5c5 2 4 11 1 14-4 6-9 7-14 6C8 27 3 22 1 14z" fill="#dd3f35" />
            <circle cx="21" cy="11" r="9.500" fill="#e6655a" />
            <path d="M30 7c-5-6-16-4-17 4-1 8 10 11 13 4 2-5-4-9-7-6-3 2-1 6 2 5" stroke="#f7c1ba" strokeWidth="1.400" />
          </svg>
        </TaskButton>
        <TaskButton active>
          <div className="flex h-8 w-8 items-center justify-center rounded-md bg-linear-to-b from-[#ff8c43] to-[#f96b34]">
            <Ic w={18} h={14}><path d="M0 2h16v6H2v5" stroke="#fff" strokeWidth="2.200" strokeLinejoin="round" /></Ic>
          </div>
        </TaskButton>
        <TaskButton>
          <svg width="30" height="30" viewBox="0 0 30 30" fill="none">
            <circle cx="15" cy="15" r="14.500" fill="#fff" stroke="#b9c4d0" />
            <circle cx="15" cy="15" r="12.800" fill="#3d91e8" />
            <path d="M22 6c-8-3-14 1-11 5 2 3 9 4 9 8 0 3-5 5-11 3" stroke="#fff" strokeWidth="5" />
          </svg>
        </TaskButton>
        <TaskButton>
          <div className="flex h-8 w-8 flex-col items-center">
            <svg width="32" height="24" viewBox="0 0 32 24" fill="none" className="shrink-0">
              <path d="M0 0h24v8h8v16H0z" fill="#f08b25" />
              <path d="M25 0v7h7z" fill="#f3a65c" />
              <path d="M24 7c-8-6-17-1-16 7 1 7 11 9 14 2l-1-4-3 1c1 4-4 5-5 1-1-5 5-7 11-7z" fill="#fff" />
            </svg>
            <span className="h-2 w-8 bg-[#f08b25] text-center font-['Open_Sans',sans-serif] text-[7px] leading-[7px] font-bold text-white">PDF</span>
          </div>
        </TaskButton>
      </div>
      <Cell className="ml-auto w-[31px] self-start pt-[8px]">
        <div className="flex h-[15px] w-[15px] -rotate-6 items-center justify-center rounded-sm bg-[#e94b20] font-['Open_Sans',sans-serif] text-[14px] leading-none font-extrabold text-white">S</div>
      </Cell>
      <Cell className="w-[21px]"><Ic w={8} h={5}><path d="M4 0l4 4.500H0z" fill="#fff" stroke="#607087" strokeWidth=".5" /></Ic></Cell>
      <Cell className="w-[27px]">
        <Ic w={15} h={14}>
          <path d="M0 4h3l4-4v14l-4-4H0z" fill="#fff" />
          <path d="M9 4.500c1.500 1 1.500 4 0 5M11 2.500c2.500 2 2.500 7 0 9M13 1c3 3 3 9 0 12" stroke="#fff" />
        </Ic>
      </Cell>
      <Cell className="w-[20px]">
        <Ic w={11} h={15}>
          <path d="M3 0h5v2h3v13H0V2h3z" fill="#fff" />
          <path d="M2.500 4.500h6v8.500h-6z" fill="#dfe4ea" stroke="#333" />
        </Ic>
      </Cell>
      <Cell className="w-[26px] pl-px">
        <Ic w={16} h={13}><path d="M0 10h2.400v3H0zM3.300 8h2.400v5H3.300zM6.600 5.500H9V13H6.600zM9.900 3h2.400v10H9.900zM13.200 0h2.400v13h-2.400z" fill="#fff" /></Ic>
      </Cell>
      <Cell className="w-[30px]">
        <Ic w={15} h={15}>
          <g fill="#f1b5bc" stroke="#ca626f" strokeWidth=".7">
            <circle cx="7.500" cy="3" r="2.700" /><circle cx="11.500" cy="5" r="2.700" /><circle cx="11.500" cy="10" r="2.700" />
            <circle cx="7.500" cy="12" r="2.700" /><circle cx="3.500" cy="10" r="2.700" /><circle cx="3.500" cy="5" r="2.700" />
          </g>
          <circle cx="7.500" cy="7.500" r="2.500" fill="#e7c8d0" /><path d="M5 8h5" stroke="#996b83" />
        </Ic>
      </Cell>
      <div className="flex w-[101px] flex-col items-center font-['Noto_Sans','Noto_Sans_CJK_SC',sans-serif] text-[12.3px] leading-[18px] whitespace-nowrap text-white">
        <span>18:50</span>
        <span>2020/2/25 星期二</span>
      </div>
      <div className="ml-2 h-full w-[14px] border border-[#46566c] bg-linear-to-b from-[#65758b] via-[#3e4f65] to-[#8494aa]" />
    </div>
  );
}

export default function App() {
  return (
    <div className="flex h-[768px] w-[1366px] flex-col overflow-hidden bg-[#bfc1cc] font-['Noto_Sans_CJK_SC',sans-serif]">
      <TitleBar />
      <Ribbon />
      <DocBar />
      <div className="flex h-[583px]">
        <SlidePanel />
        <Stage />
        <SideTools />
      </div>
      <StatusBar />
      <Taskbar />
    </div>
  );
}
